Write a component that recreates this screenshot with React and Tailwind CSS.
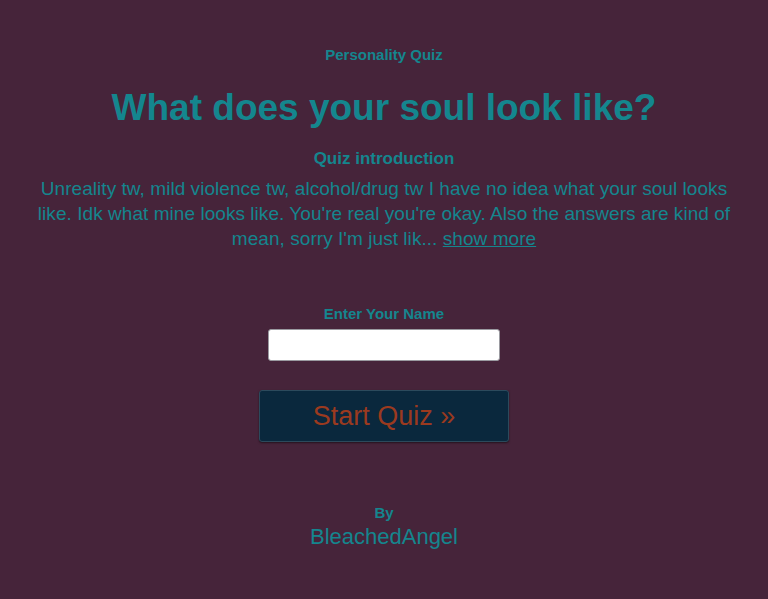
export default function App() {
  return (
    <div
      className="min-h-[599px] w-full bg-[#46243a] text-[#14868e] flex flex-col items-center text-center px-[30px] pt-[45px]"
      style={{ fontFamily: '"Liberation Sans", Arial, sans-serif' }}
    >
      <p className="text-[15px] font-bold leading-[20px]">Personality Quiz</p>
      <h1 className="mt-[20px] text-[37px] font-bold leading-[46px]">What does your soul look like?</h1>
      <p className="mt-[17px] text-[17px] font-bold leading-[22px]">Quiz introduction</p>
      <p className="mt-[6px] text-[19px] leading-[25px] tracking-[0.05px] max-w-[700px]">
        Unreality tw, mild violence tw, alcohol/drug tw I have no idea what your soul looks like. Idk what mine looks like. You're real you're okay. Also the answers are kind of mean, sorry I'm just lik...{" "}
        <a href="#" className="underline">show more</a>
      </p>

      <label className="mt-[53px] text-[15px] font-bold leading-[20px]">Enter Your Name</label>
      <input
        type="text"
        className="mt-[5px] w-[232px] h-[32px] bg-white rounded-[3px] border border-[#9a9aa0] outline-none"
      />

      <button className="mt-[29px] w-[250px] h-[52px] bg-[#0a283d] border border-[#2c4a5c] rounded-[3px] text-[#9b3a1f] text-[27px] leading-none shadow-[0_1px_2px_rgba(0,0,0,0.5)]">
        Start Quiz »
      </button>

      <p className="mt-[61px] text-[15px] font-bold leading-[20px]">By</p>
      <p className="mt-[1px] text-[22px] leading-[26px]">BleachedAngel</p>
    </div>
  );
}
